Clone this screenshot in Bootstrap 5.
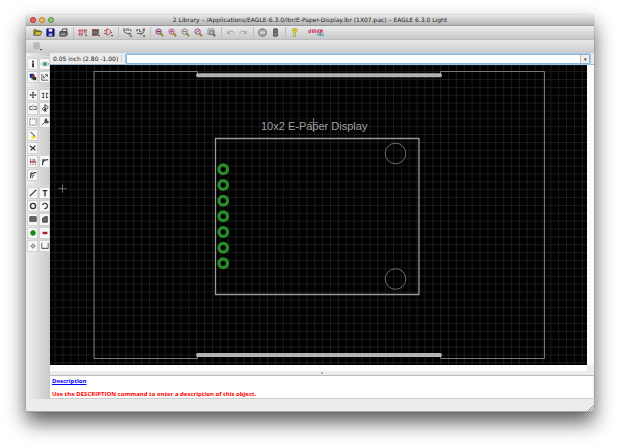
<!DOCTYPE html>
<html lang="en">
<head>
<meta charset="utf-8">
<meta name="viewport" content="width=device-width, initial-scale=1">
<title>2 Library - EAGLE 6.3.0 Light</title>
<link href="https://cdn.jsdelivr.net/npm/bootstrap@5.3.0/dist/css/bootstrap.min.css" rel="stylesheet">
<style>
body{font-family:"Open Sans","Noto Sans",sans-serif;font-size:6px;line-height:8px;background:#fff;padding:15px 26px 36px}
.app-window{background:#ececec;border-radius:3px 3px 1px 1px;box-shadow:0 10px 20px rgba(0,0,0,.66),0 0 1px #888}
.title-bar{height:11px;padding:0 4px;background:linear-gradient(#e8e8e8,#b4b4b4);border-bottom:1px solid #999;border-radius:3px 3px 0 0;color:#222}
.title-text{font-size:6px;font-family:"DejaVu Sans",sans-serif}
.lights{width:40px;gap:3px}
.light{width:6px;height:6px;border:1px solid #a33;border-radius:50%;background:#f0655c}
.light-min{background:#f6bd55;border-color:#b87c28}
.light-max{background:#90cf70;border-color:#508d3c}
.tool-bar{height:14px;padding-left:5px;background:linear-gradient(#ebebeb,#c8c8c8);border-bottom:1px solid #bbb}
.option-bar{height:13px;padding-left:5px;background:linear-gradient(#e8e8e8,#cbcbcb)}
.tool-group{padding-right:3px;margin-right:2px;border-right:1px solid #bdbdbd;height:12px}
.tool-group.plain{border-color:transparent}
.tool-btn{width:13px;height:12px;padding:0;border:0;border-radius:0;display:flex;align-items:center;justify-content:center}
.tool-btn svg{width:9px;height:9px}
.tool-btn.wide{width:18px}
.tool-btn.wide svg{width:18px}
svg{fill:none;stroke:#444;stroke-width:1}
.side-bar{width:24px;flex:none;padding-top:3px;background:linear-gradient(90deg,#f0f0f0,#c9c9c9);gap:4px}
.side-group{display:grid;grid-template-columns:repeat(2,minmax(0,1fr));border-top:1px solid #ddd}
.rows-2{height:27px;grid-template-rows:repeat(2,1fr)}
.rows-7{height:94px;grid-template-rows:repeat(7,1fr)}
.rows-5{height:67px;grid-template-rows:repeat(5,1fr)}
.side-btn{width:auto;height:auto;margin:1px 0 0 1px;background:#f7f7f7;outline:1px solid #d2d2d2;outline-offset:-1px}
.side-btn svg{width:8px;height:8px}
.first{grid-column:1}
.command-bar{height:11px}
.coords{width:76px;padding-left:3px;color:#111;font-family:"DejaVu Sans",sans-serif}
.coords span{border-right:1px solid #ccc;padding-right:3px}
.command-box{border:1px solid #86b5dc;box-shadow:0 0 1px 1px #a5c7e3;border-radius:1px;height:10px}
.command-box input{min-width:0;height:8px;min-height:0;padding:0 2px;border:0;border-radius:0;font-size:6px}
.command-box button{width:9px;padding:0;border:0;border-left:1px solid #bbb;border-radius:0;font-size:5px;line-height:8px;background:#eee;color:#333}
.drawing-row{border-top:1px solid #9ab9d0;background:#fafafa;padding-right:7px;min-height:100px}
.drawing{width:100%;height:100%;background:#000}
.h-scroll{height:6px;background:#fdfdfd;margin-right:7px}
.splitter{height:5px;border-bottom:1px solid #bbb;background:#ececec}
.splitter i{width:2px;height:2px;background:#aaa;border-radius:50%}
.description{height:23px;padding:1px 2px;background:#fff;margin-right:1px;border-bottom:1px solid #ccc;font-weight:700;color:#f00;line-height:8px}
.description a{color:#00f}
.description p{margin:0}
.message{padding-top:5px}
.status{height:13px;border-bottom:1px solid #aaa}
.status svg{width:6px;height:6px}
</style>
<script src="https://cdn.jsdelivr.net/npm/bootstrap@5.3.0/dist/js/bootstrap.bundle.min.js"></script>
</head>
<body class="d-flex flex-column min-vh-100">
<div class="app-window d-flex flex-column flex-grow-1">
 <header class="title-bar d-flex align-items-center">
  <div class="lights d-flex"><span class="light"></span><span class="light light-min"></span><span class="light light-max"></span></div>
  <div class="title-text flex-grow-1 text-center text-nowrap">2 Library – /Applications/EAGLE-6.3.0/lbr/E-Paper-Display.lbr (1X07.pac) – EAGLE 6.3.0 Light</div>
  <div class="lights"></div>
 </header>
 <nav class="tool-bar d-flex align-items-center" aria-label="Actions">
  <div class="tool-group d-flex">
   <button class="btn tool-btn" aria-label="Open"><svg viewBox="0 0 10 10"><path d="M1 8V2h3l1 1h3v2" fill="#998c28" stroke="#77701f"/><path d="M1 8l2-4h7L8 8z" fill="#d0cb28" stroke="#555"/></svg></button>
   <button class="btn tool-btn" aria-label="Save"><svg viewBox="0 0 10 10"><path d="M1 1h8v8H1z" fill="#1818a0" stroke="#111164"/><path d="M3 1h4v3H3z" fill="#eee" stroke="none"/><path d="M3 6h4v3H3z" fill="#aab" stroke="none"/></svg></button>
   <button class="btn tool-btn" aria-label="Print"><svg viewBox="0 0 10 10"><path d="M3 5l1-4h5L8 5" fill="#ddd"/><path d="M1 4h8v4l-2 1H1z" fill="#666"/><path d="M2 7h5" stroke="#ccc"/></svg></button>
  </div>
  <div class="tool-group d-flex">
   <button class="btn tool-btn" aria-label="Device"><svg viewBox="0 0 10 10"><path d="M2 1v8M4.500 1v8M0 3h5M0 7h5M7 1v5M9 1v5M6 3h4" style="stroke:#b8525b"/><path d="M8 8h2" style="stroke:#222"/></svg></button>
   <button class="btn tool-btn" aria-label="Package"><svg viewBox="0 0 10 10"><path d="M1 2h8M1 8h6" style="stroke:#b8525b;stroke-width:2"/><path d="M2 3h6v4H2z" fill="#777"/><path d="M8 8.500h2" style="stroke:#222"/></svg></button>
   <button class="btn tool-btn" aria-label="Symbol"><svg viewBox="0 0 10 10"><path d="M0 3h3M0 6h3M3 1v7c6-1 6-6 0-7M7 5h2" style="stroke:#b8424e"/><path d="M8 8.500h2" style="stroke:#222"/></svg></button>
  </div>
  <div class="tool-group d-flex">
   <button class="btn tool-btn" aria-label="Script"><svg viewBox="0 0 10 10"><path d="M0 1h2v2H0M4 3V1h2v2M8 1v2h2M1 4l3 2h5M6 8l3-2" style="stroke:#555"/><path d="M8 9h2" style="stroke:#111"/></svg></button>
   <button class="btn tool-btn" aria-label="Run ULP"><svg viewBox="0 0 10 10"><path d="M0 1v2h2V1M4 1v3h2M8 4V1h2v2H8M1 6h5l3-1M5 8l2-2" style="stroke:#555"/><path d="M8 9h2" style="stroke:#111"/></svg></button>
  </div>
  <div class="tool-group d-flex">
   <button class="btn tool-btn" aria-label="Zoom to fit"><svg viewBox="0 0 10 10"><circle cx="4" cy="4" r="3" fill="#d7b1d5" stroke="#714775"/><path d="M2 4h4" stroke="#713"/><path d="M6 6l3 3" style="stroke:#8d8126;stroke-width:2"/></svg></button>
   <button class="btn tool-btn" aria-label="Zoom in"><svg viewBox="0 0 10 10"><circle cx="4" cy="4" r="3" fill="#ead8ea" stroke="#985a98"/><path d="M4 2v4M2 4h4" style="stroke:#b33962"/><path d="M6 6l3 3" style="stroke:#8d8126;stroke-width:2"/></svg></button>
   <button class="btn tool-btn" aria-label="Zoom out"><svg viewBox="0 0 10 10"><circle cx="4" cy="4" r="3" fill="#ddd" stroke="#777"/><path d="M2 4h4" style="stroke:#a56"/><path d="M6 6l3 3" style="stroke:#8d8126;stroke-width:2"/></svg></button>
   <button class="btn tool-btn" aria-label="Redraw"><svg viewBox="0 0 10 10"><circle cx="4" cy="4" r="3" fill="#ecd7ec" stroke="#754875"/><path d="M2 5l4-2" style="stroke:#b33962"/><path d="M6 6l3 3" style="stroke:#8d8126;stroke-width:2"/></svg></button>
   <button class="btn tool-btn" aria-label="Select area"><svg viewBox="0 0 10 10"><path d="M1 1h7v6H1z" stroke-dasharray="1 1"/><circle cx="5" cy="5" r="2.500" fill="#c9a5c9" stroke="#666"/><path d="M7 7l2 2" style="stroke:#555;stroke-width:2"/></svg></button>
  </div>
  <div class="tool-group d-flex">
   <button class="btn tool-btn" aria-label="Undo"><svg viewBox="0 0 10 10"><path d="M2 3v3h3M2 6c1-3 6-4 7 0" style="stroke:#999"/></svg></button>
   <button class="btn tool-btn" aria-label="Redo"><svg viewBox="0 0 10 10"><path d="M8 3v3H5M8 6C7 3 2 2 1 6" style="stroke:#999"/></svg></button>
  </div>
  <div class="tool-group d-flex">
   <button class="btn tool-btn" aria-label="Stop"><svg viewBox="0 0 10 10"><path d="M3 1h4l2 2v4L7 9H3L1 7V3z" fill="#aaa" stroke="#666"/><path d="M2 5h6" style="stroke:#eee;stroke-width:2;stroke-dasharray:1 .5"/></svg></button>
   <button class="btn tool-btn" aria-label="Go"><svg viewBox="0 0 10 10"><path d="M3 1h4v8H3z" fill="#666"/><path d="M4 3h2" style="stroke:#a99"/><path d="M4 7h2" style="stroke:#7c7;stroke-width:2"/></svg></button>
  </div>
  <div class="tool-group plain d-flex">
   <button class="btn tool-btn" aria-label="Help"><svg viewBox="0 0 10 10"><path d="M3 3c0-3 5-2 4 0L5 5v2M5 8v2" style="stroke:#555;stroke-width:2.200"/><path d="M3 3c0-3 5-2 4 0L5 5v2M5 8v2" style="stroke:#eee500;stroke-width:1.600"/></svg></button>
  </div>
  <button class="btn tool-btn wide" aria-label="Design link"><svg viewBox="0 0 18 10"><path d="M3 1v4H1V3h2M5 4h2V2H5v3h2M9 2H8v1h1v2H8M10.500 2v3M14 5h-2V2h2v5h-2M15 5V2h1v3" style="stroke:#cc3f62"/><path d="M11 5v4M12.500 7v2M14 9V7h1v2M16.500 5v4M18 7l-1 1 1 1" style="stroke:#4ba6c3"/></svg></button>
 </nav>
 <div class="option-bar d-flex align-items-center"><button class="btn tool-btn" aria-label="Grid"><svg viewBox="0 0 10 10"><path d="M1 1h6v6H1zM3 1v6M5 1v6M1 3h6M1 5h6" style="stroke:#aaa"/><path d="M8 8.500h2" style="stroke:#222"/></svg></button></div>
 <main class="d-flex flex-grow-1">
  <aside class="side-bar d-flex flex-column" aria-label="Tools">
   <div class="side-group rows-2">
    <button class="btn tool-btn side-btn" aria-label="Info"><svg viewBox="0 0 10 10"><path d="M5 1v2M5 4v5" style="stroke:#111;stroke-width:2"/></svg></button>
    <button class="btn tool-btn side-btn" aria-label="Show"><svg viewBox="0 0 10 10"><path d="M0 5q5-5 10 0q-5 5-10 0" fill="#eef" style="stroke:#78b47a"/><circle cx="5" cy="5" r="1.500" fill="#178296" style="stroke:#178296"/></svg></button>
    <button class="btn tool-btn side-btn" aria-label="Layers"><svg viewBox="0 0 10 10"><path d="M1 1h5v5H1z" fill="#1c1c98" style="stroke:none"/><path d="M3 4h4v4H3z" fill="#1a761d" style="stroke:none"/><path d="M5 5h4v4H5z" fill="#333" style="stroke:none"/><path d="M4 2h3v3H4z" fill="#93294c" style="stroke:none"/></svg></button>
    <button class="btn tool-btn side-btn" aria-label="Mark"><svg viewBox="0 0 10 10"><path d="M1 1v8h8M3 7l5-5M5 2h3v3M3 3v3"/></svg></button>
   </div>
   <div class="side-group rows-7">
    <button class="btn tool-btn side-btn" aria-label="Move"><svg viewBox="0 0 10 10"><path d="M5 1v8M1 5h8M4 2h2M4 8h2M2 4v2M8 4v2" style="stroke:#222"/></svg></button>
    <button class="btn tool-btn side-btn" aria-label="Copy"><svg viewBox="0 0 10 10"><path d="M3 2v7M7 2v7M1 3h3M6 3h3M1 8h3M6 8h3" style="stroke:#333"/></svg></button>
    <button class="btn tool-btn side-btn" aria-label="Mirror"><svg viewBox="0 0 10 10"><path d="M4 3H1v4h3M6 3h3v4H6"/><path d="M5 1v8" stroke-dasharray="1 1"/></svg></button>
    <button class="btn tool-btn side-btn" aria-label="Rotate"><svg viewBox="0 0 10 10"><path d="M5 0v10M5 2c5-1 5 5 0 5M5 4C1 4 1 8 4 8M7 5L4 7l3 2" style="stroke:#222"/></svg></button>
    <button class="btn tool-btn side-btn" aria-label="Group"><svg viewBox="0 0 10 10"><path d="M1 1h8v8H1z" stroke-dasharray="1.500 1"/></svg></button>
    <button class="btn tool-btn side-btn" aria-label="Change"><svg viewBox="0 0 10 10"><path d="M1 9l4-4M5 6V2l2-1v3h2v2H5" fill="#555" style="stroke:#333"/></svg></button>
    <button class="btn tool-btn side-btn first" aria-label="Paste"><svg viewBox="0 0 10 10"><path d="M2 1l5 5M5 6l3 1" style="stroke:#776;stroke-width:1.500"/><path d="M3 8h5" style="stroke:#f4e500;stroke-width:2.500"/></svg></button>
    <button class="btn tool-btn side-btn first" aria-label="Delete"><svg viewBox="0 0 10 10"><path d="M1 2l7 6M8 2L2 8" style="stroke:#222;stroke-width:1.500"/></svg></button>
    <button class="btn tool-btn side-btn first" aria-label="Name"><svg viewBox="0 0 10 10"><path d="M2 1v3M5 1v3M7 1v3M2 7v2M5 7v2M8 7v2" style="stroke:#555"/><path d="M1 5h8" style="stroke:#b44;stroke-width:2"/></svg></button>
    <button class="btn tool-btn side-btn" aria-label="Miter"><svg viewBox="0 0 10 10"><path d="M2 9Q1 2 9 2" style="stroke:#333;stroke-width:1.500"/><path d="M2 5V2h3"/></svg></button>
    <button class="btn tool-btn side-btn first" aria-label="Optimize"><svg viewBox="0 0 10 10"><path d="M2 9Q1 2 9 2" style="stroke:#333;stroke-width:1.500"/><path d="M1 4l3-3M4 6l3-1M4 9l1-3"/></svg></button>
   </div>
   <div class="side-group rows-5">
    <button class="btn tool-btn side-btn" aria-label="Wire"><svg viewBox="0 0 10 10"><path d="M1 9l8-8" style="stroke:#333;stroke-width:1.500"/></svg></button>
    <button class="btn tool-btn side-btn" aria-label="Text"><svg viewBox="0 0 10 10"><path d="M2 2h6M5 2v7" style="stroke:#333;stroke-width:1.700"/></svg></button>
    <button class="btn tool-btn side-btn" aria-label="Circle"><svg viewBox="0 0 10 10"><circle cx="5" cy="5" r="3.200" style="stroke:#333;stroke-width:1.700"/></svg></button>
    <button class="btn tool-btn side-btn" aria-label="Arc"><svg viewBox="0 0 10 10"><path d="M2 4C3 0 9 2 8 5c0 2-2 4-4 3" style="stroke:#444;stroke-width:1.700"/></svg></button>
    <button class="btn tool-btn side-btn" aria-label="Rectangle"><svg viewBox="0 0 10 10"><path d="M1 2h8v6H1z" fill="#666"/></svg></button>
    <button class="btn tool-btn side-btn" aria-label="Polygon"><svg viewBox="0 0 10 10"><path d="M2 9V4l3-2h3v7z" fill="#666"/></svg></button>
    <button class="btn tool-btn side-btn" aria-label="Pad"><svg viewBox="0 0 10 10"><circle cx="5" cy="5" r="3" fill="#168b16" style="stroke:#168b16"/></svg></button>
    <button class="btn tool-btn side-btn" aria-label="SMD"><svg viewBox="0 0 10 10"><path d="M2 5h6" style="stroke:#a91e2b;stroke-width:3"/></svg></button>
    <button class="btn tool-btn side-btn" aria-label="Hole"><svg viewBox="0 0 10 10"><path d="M5 1v8M1 5h8" style="stroke:#aaa"/><circle cx="5" cy="5" r="2" style="stroke:#777"/></svg></button>
    <button class="btn tool-btn side-btn" aria-label="Dimension"><svg viewBox="0 0 10 10"><path d="M1 1v7h8V1M3 7v2M7 7v2"/></svg></button>
   </div>
  </aside>
  <section class="d-flex flex-column flex-grow-1">
   <div class="command-bar d-flex align-items-center">
    <label class="coords text-nowrap" for="command"><span>0.05 inch (2.80 -1.00)</span></label>
    <div class="command-box input-group flex-nowrap flex-fill w-auto me-1"><input id="command" class="form-control" type="text"><button class="btn" aria-label="Command history">▾</button></div>
   </div>
   <div class="drawing-row flex-grow-1 d-flex">
    <svg class="drawing" viewBox="50 65 537 300" preserveAspectRatio="xMidYMid slice" role="img" aria-label="Package drawing">
     <defs><pattern id="grid" x="62.400" y="189.200" width="7.870" height="7.870" patternUnits="userSpaceOnUse"><path d="M0 .5h7.870M.5 0v7.870" style="stroke:#1b1b1b"/></pattern></defs>
     <path d="M0 0h700v500H0z" fill="url(#grid)" style="stroke:none"/>
     <path d="M197.500 75V71.500H94v287h103.500V355M440.500 75V71.500h104v287h-104V355" style="stroke:#777"/>
     <path d="M198 75.300h242M198 355h242" style="stroke:#b3b3b3;stroke-width:4;stroke-linecap:round"/>
     <path d="M215.500 138.500h203.500v156H215.500z" style="stroke:#999;stroke-width:1.300"/>
     <g style="stroke:#6d6d6d"><circle cx="395.500" cy="153.500" r="10.300"/><circle cx="395.500" cy="279" r="10.300"/><path d="M58.500 188.700h8M62.500 184.700v8M309 122.500h9M313.500 118v13"/></g>
     <g style="stroke:#278c27;stroke-width:3.300"><circle cx="223.200" cy="169.300" r="4.300"/><circle cx="223.200" cy="185" r="4.300"/><circle cx="223.200" cy="200.700" r="4.300"/><circle cx="223.200" cy="216.300" r="4.300"/><circle cx="223.200" cy="232" r="4.300"/><circle cx="223.200" cy="247.700" r="4.300"/><circle cx="223.200" cy="263.300" r="4.300"/></g>
     <text x="261" y="130" font-family="Liberation Sans, sans-serif" font-size="11" fill="#a2a2a2" style="stroke:none">10x2 E-Paper Display</text>
    </svg>
   </div>
   <div class="h-scroll"></div>
   <div class="splitter d-flex align-items-center justify-content-center"><i></i></div>
   <div class="description"><p><a href="#description">Description</a></p><p class="message">Use the DESCRIPTION command to enter a description of this object.</p></div>
  </section>
 </main>
 <footer class="status d-flex align-items-end justify-content-end"><svg viewBox="0 0 6 6"><path d="M0 6l6-6M2 6l4-4M4 6l2-2" style="stroke:#999"/></svg></footer>
</div>
</body>
</html>
